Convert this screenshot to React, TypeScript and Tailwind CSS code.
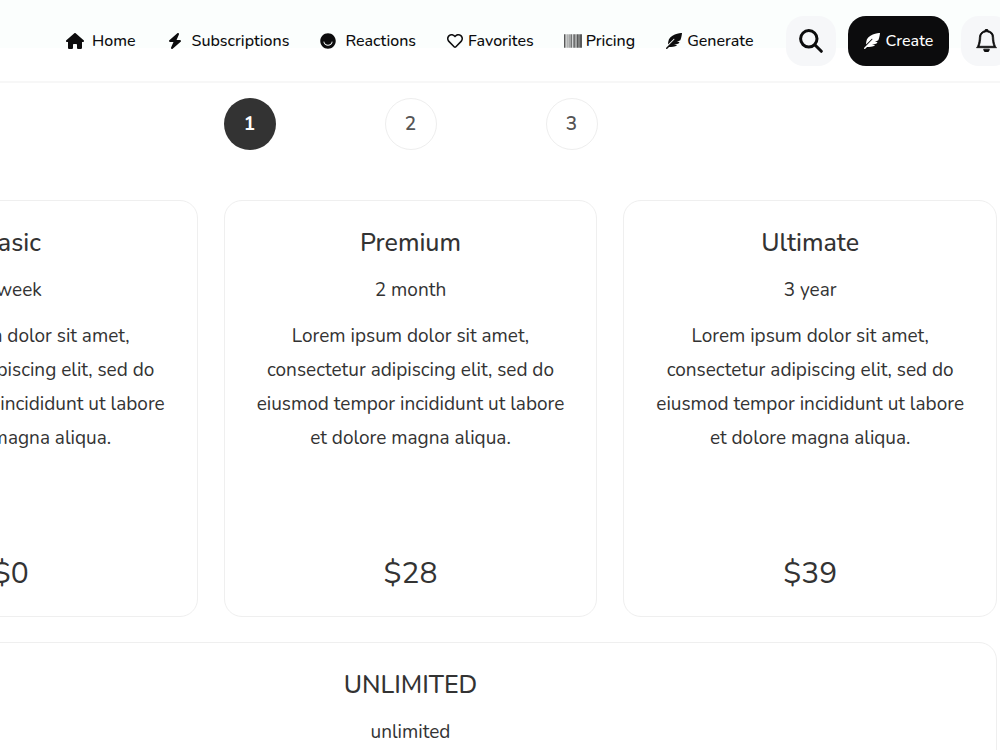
import type { ReactNode } from 'react'
import { BsBell } from 'react-icons/bs'
import { FaBarcode, FaEllo, FaFeatherAlt, FaRegHeart } from 'react-icons/fa'
import { FaBolt, FaHouse } from 'react-icons/fa6'

interface Plan {
  name: string
  duration: string
  price: string
}

const plans: Plan[] = [
  { name: 'Basic', duration: '1 week', price: '$0' },
  { name: 'Premium', duration: '2 month', price: '$28' },
  { name: 'Ultimate', duration: '3 year', price: '$39' }
]

const steps = [1, 2, 3]

function SearchIcon() {
  return (
    <svg viewBox="0 0 24 24" className="size-6" fill="none" stroke="currentColor" strokeWidth="3" strokeLinecap="round">
      <circle cx="9.8" cy="9.8" r="8.2" />
      <path d="M15.8 15.8 22.3 22.3" />
    </svg>
  )
}

function NavItem({ icon, label, wide }: { icon: ReactNode; label: string; wide?: boolean }) {
  return (
    <a href="#" className={wide ? 'flex items-center gap-[7px]' : 'flex items-center gap-[3px]'}>
      <span className="flex w-5 justify-center">{icon}</span>
      <span>{label}</span>
    </a>
  )
}

function Header() {
  return (
    <header className="flex h-[83px] items-center overflow-hidden border-b-2 border-[#f7f7f7] bg-[linear-gradient(#fbfefd_48px,#ffffff_48px)] pl-[65px] text-base font-medium text-[#0c0c0d]">
      <nav className="flex shrink-0 items-center gap-[29px]">
        <NavItem wide icon={<FaHouse className="h-4 w-[18px]" />} label="Home" />
        <NavItem wide icon={<FaBolt className="size-4" />} label="Subscriptions" />
        <NavItem wide icon={<FaEllo className="size-4" />} label="Reactions" />
        <NavItem icon={<FaRegHeart className="size-4" />} label="Favorites" />
        <NavItem icon={<FaBarcode className="size-[18px]" />} label="Pricing" />
        <NavItem icon={<FaFeatherAlt className="size-4" />} label="Generate" />
      </nav>

      {/* Actions */}
      <div className="ml-8 flex shrink-0 items-center gap-3">
        <button aria-label="Search" className="flex size-[50px] items-center justify-center rounded-[18px] bg-[#f6f7f9]">
          <SearchIcon />
        </button>
        <button className="flex h-[50px] items-center gap-1.5 rounded-[18px] bg-[#0c0c0d] px-4 text-white">
          <FaFeatherAlt className="size-4" />
          <span>Create</span>
        </button>
        <button aria-label="Notifications" className="flex size-[50px] items-center justify-center rounded-[18px] bg-[#f6f7f9]">
          <BsBell className="size-[23px]" strokeWidth={0.5} stroke="currentColor" />
        </button>
      </div>
    </header>
  )
}

function Steps() {
  return (
    <div className="mx-auto flex w-[374px] justify-between">
      {steps.map((step) => (
        <button
          key={step}
          className={
            step === 1
              ? 'size-[52px] rounded-full bg-[#333333] text-[19px] font-bold text-white'
              : 'size-[52px] rounded-full border border-[#eeeeee] text-[19px] font-semibold text-[#555555]'
          }
        >
          {step}
        </button>
      ))}
    </div>
  )
}

function PlanCard({ plan }: { plan: Plan }) {
  return (
    <section className="flex h-[417px] flex-col items-center rounded-[18px] border border-[#efefef] px-7 pt-[26px] pb-6 text-center">
      <h2 className="text-[25px] leading-8 font-medium">{plan.name}</h2>
      <p className="mt-3.5 leading-[34px]">{plan.duration}</p>
      <p className="mt-3 leading-[34px]">
        Lorem ipsum dolor sit amet, consectetur adipiscing elit, sed do eiusmod tempor incididunt ut labore et dolore
        magna aliqua.
      </p>
      <p className="mt-auto text-[30px] leading-9">{plan.price}</p>
    </section>
  )
}

export default function App() {
  return (
    <div className="h-screen overflow-hidden bg-white font-['Nunito','Lato',sans-serif] text-[19px] text-[#333333]">
      <Header />

      <main className="flex justify-end pt-[15px] pr-[3px]">
        <div className="w-[1173px] shrink-0">
          <Steps />

          <div className="mt-[50px] grid grid-cols-3 gap-x-[26px] gap-y-[25px]">
            {plans.map((plan) => (
              <PlanCard key={plan.name} plan={plan} />
            ))}
            <section className="col-span-3 h-[417px] rounded-[18px] border border-[#efefef] pt-[26px] text-center">
              <h2 className="text-[25px] leading-8 font-medium">UNLIMITED</h2>
              <p className="mt-3.5 leading-[34px]">unlimited</p>
            </section>
          </div>
        </div>
      </main>
    </div>
  )
}
